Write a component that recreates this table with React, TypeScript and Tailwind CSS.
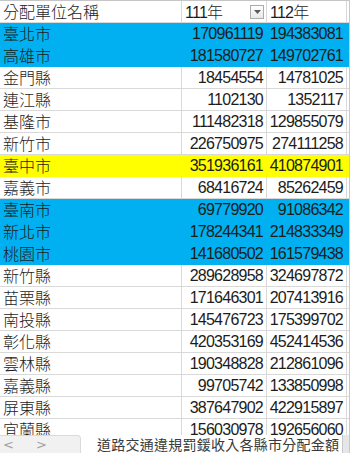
import React from "react";

type Row = { name: string; a: string; b: string; fill?: "blue" | "yellow" };

const rows: Row[] = [
  { name: "臺北市", a: "170961119", b: "194383081", fill: "blue" },
  { name: "高雄市", a: "181580727", b: "149702761", fill: "blue" },
  { name: "金門縣", a: "18454554", b: "14781025" },
  { name: "連江縣", a: "1102130", b: "1352117" },
  { name: "基隆市", a: "111482318", b: "129855079" },
  { name: "新竹市", a: "226750975", b: "274111258" },
  { name: "臺中市", a: "351936161", b: "410874901", fill: "yellow" },
  { name: "嘉義市", a: "68416724", b: "85262459" },
  { name: "臺南市", a: "69779920", b: "91086342", fill: "blue" },
  { name: "新北市", a: "178244341", b: "214833349", fill: "blue" },
  { name: "桃園市", a: "141680502", b: "161579438", fill: "blue" },
  { name: "新竹縣", a: "289628958", b: "324697872" },
  { name: "苗栗縣", a: "171646301", b: "207413916" },
  { name: "南投縣", a: "145476723", b: "175399702" },
  { name: "彰化縣", a: "420353169", b: "452414536" },
  { name: "雲林縣", a: "190348828", b: "212861096" },
  { name: "嘉義縣", a: "99705742", b: "133850998" },
  { name: "屏東縣", a: "387647902", b: "422915897" },
  { name: "宜蘭縣", a: "156030978", b: "192656060" },
];

const cjk = { fontFamily: '"Noto Sans CJK TC", "Noto Sans CJK SC", sans-serif' };
const num = { fontFamily: '"Liberation Sans", Arial, sans-serif', letterSpacing: "-0.75px" };

function DataRow({ r }: { r: Row }) {
  const bg =
    r.fill === "blue"
      ? "bg-[#00b0f0] border-[#00b0f0]"
      : r.fill === "yellow"
      ? "bg-[#ffff00] border-[#ffff00]"
      : "bg-white border-[#d9d9d9]";
  return (
    <div className="flex h-[22px] shrink-0 text-[#1c1c1c]">
      <div className={`w-[182px] h-[22px] border-r border-b ${bg} pl-[3px] text-[16px] font-light leading-[21px]`} style={cjk}>
        {r.name}
      </div>
      <div className={`w-[85px] h-[22px] border-r border-b ${bg} pr-[3px] text-right text-[16px] leading-[22px]`} style={num}>
        {r.a}
      </div>
      <div className={`w-[80px] h-[22px] border-r border-b ${bg} pr-[3px] text-right text-[16px] leading-[22px]`} style={num}>
        {r.b}
      </div>
      <div className={`flex-1 h-[22px] border-b ${bg}`} />
    </div>
  );
}

export default function App() {
  return (
    <div className="w-[350px] h-[453px] overflow-hidden bg-white flex flex-col border-r border-[#c8c8c8]">
      <div className="h-[435px] overflow-hidden flex flex-col border-t border-[#c6c6c6]">
        <div className="flex h-[22px] shrink-0 text-[#1c1c1c]">
          <div className="w-[182px] h-[22px] border-r border-b border-[#d9d9d9] pl-[3px] text-[16px] font-light leading-[21px]" style={cjk}>
            分配單位名稱
          </div>
          <div className="w-[85px] h-[22px] border-r border-b border-[#d9d9d9] pl-[3px] pr-[2px] flex items-center justify-between">
            <span className="text-[16px] leading-[21px]">
              <span style={num}>111</span>
              <span className="font-light" style={cjk}>年</span>
            </span>
            <span className="w-[14px] h-[14px] border border-[#ababab] bg-gradient-to-b from-white to-[#e8e8e8] flex items-center justify-center">
              <svg width="7" height="4" viewBox="0 0 7 4">
                <path d="M0 0 L7 0 L3.5 4 Z" fill="#5a5a5a" />
              </svg>
            </span>
          </div>
          <div className="w-[80px] h-[22px] border-r border-b border-[#d9d9d9] pl-[3px] text-[16px] leading-[21px]">
            <span style={num}>112</span>
            <span className="font-light" style={cjk}>年</span>
          </div>
          <div className="flex-1 h-[22px] border-b border-[#d9d9d9]" />
        </div>
        {rows.map((r) => (
          <DataRow key={r.name} r={r} />
        ))}
      </div>
      <div className="flex h-[18px] shrink-0 bg-white">
        <div
          className="w-[81px] h-[18px] bg-[#f1f1f1] border-t border-r border-[#dadada] rounded-tr-[4px] flex items-center text-[#a0a0a0] text-[13px]"
          style={{ fontFamily: '"DejaVu Sans", sans-serif' }}
        >
          <span className="ml-[3px]">&lt;</span>
          <span className="ml-[22px]">&gt;</span>
        </div>
        <div className="w-[12px]" />
        <div
          className="w-[250px] h-[18px] border-r border-[#c8c8c8] pl-[4px] text-[14px] leading-[18px] text-[#3a3a3a] tracking-[0.25px] whitespace-nowrap overflow-hidden"
          style={cjk}
        >
          道路交通違規罰鍰收入各縣市分配金額
        </div>
        <div className="flex-1 bg-[#e6e6e6]" />
      </div>
    </div>
  );
}
